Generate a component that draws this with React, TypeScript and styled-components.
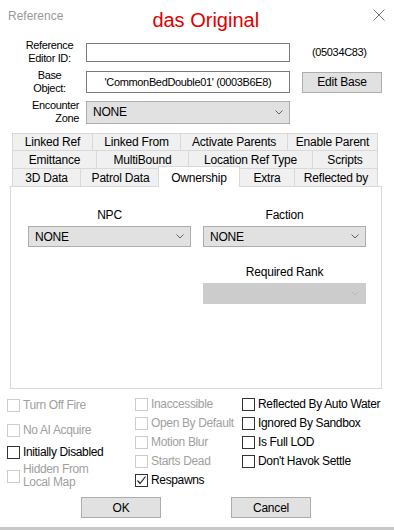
import styled, { createGlobalStyle } from 'styled-components';

const GlobalStyle = createGlobalStyle`
  html, body {
    margin: 0;
    padding: 0;
    background: #fff;
  }
  body {
    font-family: 'Liberation Sans', Arial, sans-serif;
    font-size: 11px;
    color: #000;
  }
`;

const Window = styled.div`
  width: 394px;
  height: 530px;
  box-sizing: border-box;
  background: #fff;
  border-bottom: 3px solid #c8c8c8;
  display: flex;
  flex-direction: column;
  overflow: hidden;
  letter-spacing: -0.35px;
`;

const TitleBar = styled.div`
  height: 39px;
  display: flex;
  align-items: flex-start;
  padding: 9px 9px 0 8px;
  box-sizing: border-box;
`;

const Caption = styled.span`
  font-size: 12px;
  line-height: 14px;
  color: #999;
  letter-spacing: 0;
`;

const Note = styled.span`
  margin-left: 89px;
  font-size: 20px;
  line-height: 22px;
  color: #e00000;
  letter-spacing: 0;
`;

const CloseIcon = styled.svg`
  margin-left: auto;
  margin-top: 0;
`;

const Form = styled.div`
  display: grid;
  grid-template-columns: 86px 204px 1fr;
  grid-auto-rows: 26px;
  row-gap: 4px;
  align-items: center;
`;

const FieldLabel = styled.div<{ $align?: string }>`
  padding: 0 7px 0 20px;
  text-align: ${(p) => p.$align || 'center'};
  line-height: 13px;
`;

const TextBox = styled.div<{ $h?: number }>`
  height: ${(p) => p.$h || 19}px;
  box-sizing: border-box;
  border: 1px solid #7a7a7a;
  background: #fff;
  display: flex;
  align-items: center;
  justify-content: center;
`;

const FormId = styled.span`
  padding-left: 22px;
`;

const Button = styled.div<{ $w?: number }>`
  width: ${(p) => p.$w || 80}px;
  height: 21px;
  box-sizing: border-box;
  border: 1px solid #adadad;
  background: #e1e1e1;
  display: flex;
  align-items: center;
  justify-content: center;
  font-size: 12px;
  letter-spacing: -0.2px;
`;

const EditBase = styled(Button)`
  margin-left: 12px;
`;

const SelectBox = styled.div<{ $w?: number; $h?: number; $disabled?: boolean }>`
  width: ${(p) => (p.$w ? `${p.$w}px` : '100%')};
  height: ${(p) => p.$h || 21}px;
  box-sizing: border-box;
  border: 1px solid ${(p) => (p.$disabled ? '#cccccc' : '#adadad')};
  background: ${(p) => (p.$disabled ? '#cccccc' : '#e1e1e1')};
  display: flex;
  align-items: center;
  justify-content: space-between;
  padding: 0 6px 0 6px;
  font-size: 12px;
  letter-spacing: -0.2px;
`;

const TabStrip = styled.div`
  margin: 8px 0 0 12px;
  width: 366px;
  display: flex;
  flex-direction: column;
`;

const TabRow = styled.div<{ $h: number }>`
  display: flex;
  height: ${(p) => p.$h}px;
`;

const Tab = styled.div<{ $w: number; $active?: boolean }>`
  width: ${(p) => p.$w}px;
  box-sizing: border-box;
  border-top: 1px solid #d9d9d9;
  border-left: 1px solid #d9d9d9;
  background: #f0f0f0;
  display: flex;
  align-items: center;
  justify-content: center;
  font-size: 12px;
  letter-spacing: -0.2px;
  &:last-child {
    border-right: 1px solid #d9d9d9;
  }
  ${(p) =>
    p.$active &&
    `
    position: relative;
    z-index: 1;
    background: #fff;
    border-right: 1px solid #d9d9d9;
    margin: -2px -1px -1px -2px;
    width: ${p.$w + 3}px;
    padding-top: 1px;
  `}
`;

const Panel = styled.div`
  margin-left: 10px;
  width: 372px;
  height: 203px;
  box-sizing: border-box;
  border: 1px solid #d9d9d9;
  background: #fff;
  display: grid;
  grid-template-columns: 163px 163px;
  column-gap: 12px;
  align-content: start;
  padding: 22px 0 0 17px;
`;

const Field = styled.div<{ $col?: number }>`
  grid-column: ${(p) => p.$col || 'auto'};
  display: flex;
  flex-direction: column;
  gap: 4px;
  margin-bottom: 19px;
`;

const PanelLabel = styled.div`
  text-align: center;
  line-height: 13px;
  font-size: 12px;
  letter-spacing: -0.2px;
`;

const Checks = styled.div`
  margin-top: 9px;
  padding-left: 7px;
  display: grid;
  grid-template-columns: 128px 107px 1fr;
`;

const CheckColumn = styled.div<{ $gap?: number }>`
  display: flex;
  flex-direction: column;
  gap: ${(p) => p.$gap ?? 6}px;
`;

const CheckRow = styled.div<{ $disabled?: boolean; $top?: number }>`
  display: flex;
  align-items: center;
  gap: 3px;
  margin-top: ${(p) => p.$top || 0}px;
  line-height: 13px;
  font-size: 12px;
  letter-spacing: -0.35px;
  color: ${(p) => (p.$disabled ? '#a0a0a0' : '#000')};
`;

const Box = styled.span<{ $disabled?: boolean }>`
  width: 13px;
  height: 13px;
  flex: none;
  box-sizing: border-box;
  border: 1px solid ${(p) => (p.$disabled ? '#cccccc' : '#333333')};
  background: #fff;
  display: flex;
  align-items: center;
  justify-content: center;
`;

const ButtonRow = styled.div`
  margin-top: 8px;
  padding-left: 81px;
  display: flex;
  gap: 70px;
`;

const Chevron = ({ disabled }: { disabled?: boolean }) => (
  <svg width="8" height="5" viewBox="0 0 8 5">
    <polyline points="0.5,0.5 4,4 7.5,0.5" fill="none" stroke={disabled ? '#b8b8b8' : '#606060'} strokeWidth="1" />
  </svg>
);

const Select = ({ value, w, h, disabled }: { value?: string; w?: number; h?: number; disabled?: boolean }) => (
  <SelectBox $w={w} $h={h} $disabled={disabled}>
    <span>{value}</span>
    <Chevron disabled={disabled} />
  </SelectBox>
);

const Check = ({
  label,
  disabled,
  checked,
  top,
}: {
  label: React.ReactNode;
  disabled?: boolean;
  checked?: boolean;
  top?: number;
}) => (
  <CheckRow $disabled={disabled} $top={top}>
    <Box $disabled={disabled}>
      {checked && (
        <svg width="11" height="11" viewBox="0 0 11 11">
          <polyline points="1.5,5.5 4,8.5 9.5,1.5" fill="none" stroke="#222" strokeWidth="1.2" />
        </svg>
      )}
    </Box>
    <span>{label}</span>
  </CheckRow>
);

const tabRows: { h: number; tabs: [string, number, boolean?][] }[] = [
  {
    h: 17,
    tabs: [
      ['Linked Ref', 80],
      ['Linked From', 88],
      ['Activate Parents', 107],
      ['Enable Parent', 91],
    ],
  },
  {
    h: 18,
    tabs: [
      ['Emittance', 84],
      ['MultiBound', 92],
      ['Location Ref Type', 124],
      ['Scripts', 66],
    ],
  },
  {
    h: 18,
    tabs: [
      ['3D Data', 68],
      ['Patrol Data', 80],
      ['Ownership', 79, true],
      ['Extra', 55],
      ['Reflected by', 84],
    ],
  },
];

const App = () => {
  return (
    <Window>
      <GlobalStyle />
      <TitleBar>
        <Caption>Reference</Caption>
        <Note>das Original</Note>
        <CloseIcon width="12" height="12" viewBox="0 0 12 12">
          <line x1="0.5" y1="0.5" x2="11.5" y2="11.5" stroke="#777" strokeWidth="1" />
          <line x1="11.5" y1="0.5" x2="0.5" y2="11.5" stroke="#777" strokeWidth="1" />
        </CloseIcon>
      </TitleBar>

      <Form>
        <FieldLabel>
          Reference
          <br />
          Editor ID:
        </FieldLabel>
        <TextBox />
        <FormId>(05034C83)</FormId>

        <FieldLabel>
          Base
          <br />
          Object:
        </FieldLabel>
        <TextBox $h={22}>'CommonBedDouble01' (0003B6E8)</TextBox>
        <EditBase>Edit Base</EditBase>

        <FieldLabel $align="right">
          Encounter
          <br />
          Zone
        </FieldLabel>
        <Select value="NONE" h={23} />
        <span />
      </Form>

      <TabStrip>
        {tabRows.map((row, i) => (
          <TabRow key={i} $h={row.h}>
            {row.tabs.map(([name, w, active]) => (
              <Tab key={name} $w={w} $active={active}>
                {name}
              </Tab>
            ))}
          </TabRow>
        ))}
      </TabStrip>

      <Panel>
        <Field>
          <PanelLabel>NPC</PanelLabel>
          <Select value="NONE" />
        </Field>
        <Field>
          <PanelLabel>Faction</PanelLabel>
          <Select value="NONE" />
        </Field>
        <Field $col={2}>
          <PanelLabel>Required Rank</PanelLabel>
          <Select disabled />
        </Field>
      </Panel>

      <Checks>
        <CheckColumn $gap={0}>
          <Check label="Turn Off Fire" disabled top={1} />
          <Check label="No AI Acquire" disabled top={12} />
          <Check label="Initially Disabled" top={9} />
          <Check
            label={
              <>
                Hidden From
                <br />
                Local Map
              </>
            }
            disabled
            top={4}
          />
        </CheckColumn>
        <CheckColumn>
          <Check label="Inaccessible" disabled />
          <Check label="Open By Default" disabled />
          <Check label="Motion Blur" disabled />
          <Check label="Starts Dead" disabled />
          <Check label="Respawns" checked />
        </CheckColumn>
        <CheckColumn>
          <Check label="Reflected By Auto Water" />
          <Check label="Ignored By Sandbox" />
          <Check label="Is Full LOD" />
          <Check label="Don't Havok Settle" />
        </CheckColumn>
      </Checks>

      <ButtonRow>
        <Button>OK</Button>
        <Button>Cancel</Button>
      </ButtonRow>
    </Window>
  );
};

export default App;
